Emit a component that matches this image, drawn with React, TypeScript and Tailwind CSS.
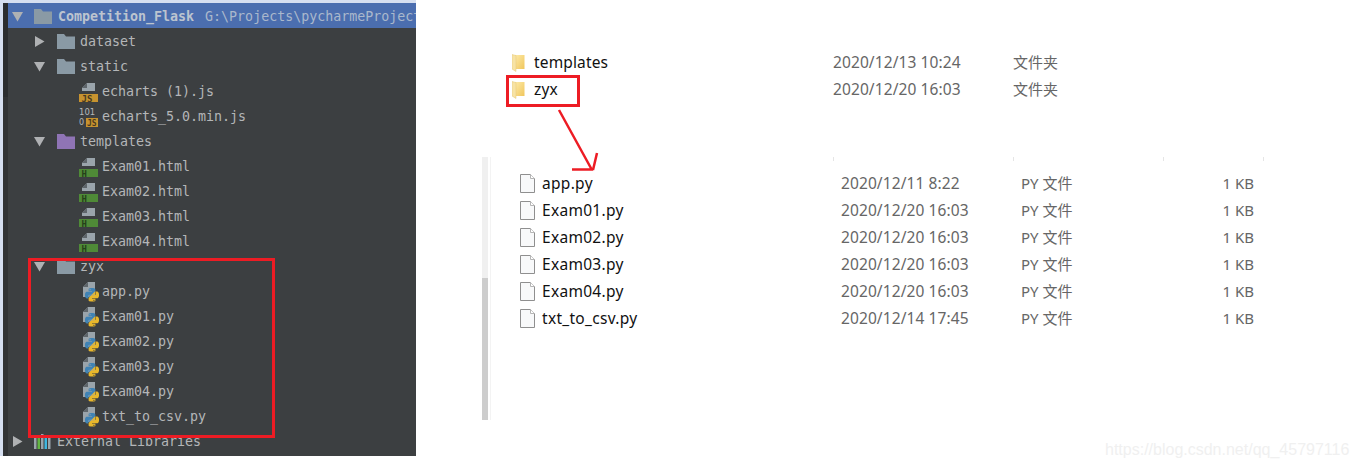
import { SiPython } from "react-icons/si"

const winFont = { fontFamily: '"Noto Sans", "Noto Sans CJK SC", sans-serif' }

function Arrow({ open, className = "" }: { open: boolean; className?: string }) {
  return (
    <svg width="11" height="11" viewBox="0 0 11 11" className={`shrink-0 ${className}`}>
      {open ? <path d="M0 1h11L5.500 10.500z" fill="#afb1b3" /> : <path d="M1 0v11L10.500 5.500z" fill="#afb1b3" />}
    </svg>
  )
}

function Folder({ color = "#8a9aa5" }: { color?: string }) {
  return (
    <svg width="18" height="15" viewBox="0 0 18 15" className="shrink-0">
      <path d="M0 0h7l2 2.500h9V15H0z" fill={color} />
    </svg>
  )
}

function Badge({ color, label, dark }: { color: string; label: string; dark: string }) {
  return (
    <svg width="20" height="20" viewBox="0 0 20 20" className="shrink-0">
      <path d="M8 1h8v8H3V6z" fill="#9aa4ab" />
      <path d="M8 1v5H3z" fill="#5f666b" />
      <rect x="0" y="12" width="19" height="8" fill={color} />
      <text x="2.500" y="19.500" fontSize="9" fontWeight="bold" fill={dark} fontFamily="DejaVu Sans Mono">{label}</text>
    </svg>
  )
}

function MinJs() {
  return (
    <svg width="20" height="20" viewBox="0 0 20 20" className="shrink-0">
      <text x="0" y="8" fontSize="8.500" fill="#b4b8ba" fontFamily="DejaVu Sans" letterSpacing="0">101</text>
      <text x="0" y="18" fontSize="8" fill="#b4b8ba" fontFamily="DejaVu Sans">0</text>
      <rect x="7" y="11" width="12" height="9" fill="#c7932f" />
      <text x="8" y="18.500" fontSize="8" fontWeight="bold" fill="#4a3b20" fontFamily="DejaVu Sans Mono">JS</text>
    </svg>
  )
}

function PyIcon() {
  return (
    <div className="relative h-[22px] w-[20px] shrink-0">
      <svg width="20" height="22" viewBox="0 0 20 22">
        <path d="M9 1h7v15H4V6z" fill="#9aa4ab" />
        <path d="M9 1v5H4z" fill="#5f666b" />
      </svg>
      <SiPython size={14} color="#3f83b5" className="absolute left-[6px] top-[7px] [clip-path:polygon(0_0,100%_0,0_100%)]" />
      <SiPython size={14} color="#e8b72b" className="absolute left-[6px] top-[7px] [clip-path:polygon(100%_0,100%_100%,0_100%)]" />
    </div>
  )
}

function TreeRow({ icon, children, pl, arrow }: { icon: React.ReactNode; children: React.ReactNode; pl: string; arrow?: boolean }) {
  return (
    <div className={`flex h-[25px] items-center ${pl}`}>
      {arrow !== undefined && <Arrow open={arrow} className="mr-[12px]" />}
      {icon}
      <span className={`${arrow !== undefined ? "ml-[5px]" : "ml-[3px]"} whitespace-pre`}>{children}</span>
    </div>
  )
}

function WinFolder() {
  return (
    <svg width="13" height="18" viewBox="0 0 13 18" className="shrink-0">
      <defs>
        <linearGradient id="fold" x1="0" y1="0" x2="1" y2="1">
          <stop offset="0" stopColor="#fdeaa8" />
          <stop offset="1" stopColor="#f0c65c" />
        </linearGradient>
      </defs>
      <path d="M3 1h9.500v14H3z" fill="url(#fold)" />
      <path d="M0 0.500l4 1v16l-4-2.500z" fill="#f7e3a4" stroke="#e5c678" strokeWidth="0.500" />
    </svg>
  )
}

function WinFile() {
  return (
    <svg width="15" height="19" viewBox="0 0 15 19" className="shrink-0">
      <path d="M0.500 0.500h10l4 4v14h-14z" fill="#f8f9fa" stroke="#8f8f8f" />
      <path d="M10.500 0.500v4h4" fill="#ffffff" stroke="#b5b5b5" />
    </svg>
  )
}

const topRows = [
  ["templates", "2020/12/13 10:24"],
  ["zyx", "2020/12/20 16:03"],
]

const pyFiles = [
  ["app.py", "2020/12/11 8:22"],
  ["Exam01.py", "2020/12/20 16:03"],
  ["Exam02.py", "2020/12/20 16:03"],
  ["Exam03.py", "2020/12/20 16:03"],
  ["Exam04.py", "2020/12/20 16:03"],
  ["txt_to_csv.py", "2020/12/14 17:45"],
]

export default function App() {
  return (
    <div className="relative flex h-[466px] w-[1357px] overflow-hidden bg-white">
      {/* left: pycharm project tree */}
      <div className="flex h-full w-[416px] shrink-0 flex-col">
        <div className="h-[3px] bg-[#d6dff0]" />
        <div className="flex h-[453px]">
          <div className="w-[3px] shrink-0 bg-[#d6dff0]" />
          <div className="flex w-[5px] shrink-0 flex-col">
            <div className="h-[94px] bg-[#2b2d2f]" />
            <div className="flex-1 bg-[#313335]" />
          </div>
          <div
            className="min-w-0 flex-1 overflow-hidden bg-[#3c3f41] text-[13.3px] text-[#b4b6b8]"
            style={{ fontFamily: '"DejaVu Sans Mono", monospace' }}
          >
            <div className="flex h-[25px] items-center whitespace-pre bg-[#4b6eaf] pl-[4px] pt-[2px]">
              <Arrow open={true} className="mr-[11px]" />
              <Folder />
              <span className="ml-[6px] shrink-0 font-bold text-[#bcc4cf]">Competition_Flask</span>
              <span className="ml-[11px] shrink-0 text-[#aab8cc]">G:\Projects\pycharmeProjects</span>
            </div>
            <div className="pt-[1px]">
              <TreeRow pl="pl-[26px]" arrow={false} icon={<Folder />}>dataset</TreeRow>
              <TreeRow pl="pl-[26px]" arrow={true} icon={<Folder />}>static</TreeRow>
              <TreeRow pl="pl-[71px]" icon={<Badge color="#c7932f" label="JS" dark="#4a3b20" />}>echarts (1).js</TreeRow>
              <TreeRow pl="pl-[71px]" icon={<MinJs />}>echarts_5.0.min.js</TreeRow>
              <TreeRow pl="pl-[26px]" arrow={true} icon={<Folder color="#8f74b5" />}>templates</TreeRow>
              {["Exam01.html", "Exam02.html", "Exam03.html", "Exam04.html"].map((f) => (
                <TreeRow key={f} pl="pl-[71px]" icon={<Badge color="#4f8a37" label="H" dark="#25401a" />}>{f}</TreeRow>
              ))}
              <TreeRow pl="pl-[26px]" arrow={true} icon={<Folder />}>zyx</TreeRow>
              {pyFiles.map(([f]) => (
                <TreeRow key={f} pl="pl-[71px]" icon={<PyIcon />}>{f}</TreeRow>
              ))}
              <div className="flex h-[25px] items-center pl-[4px]">
                <Arrow open={false} className="mr-[11px]" />
                <svg width="18" height="15" viewBox="0 0 18 15" className="shrink-0">
                  <rect x="0" y="2" width="2.500" height="13" fill="#9aa4ab" />
                  <rect x="3.500" y="2" width="2.500" height="13" fill="#62b543" />
                  <rect x="7" y="0" width="2.500" height="15" fill="#9aa4ab" />
                  <rect x="10.500" y="2" width="2.500" height="13" fill="#40b6e0" />
                  <rect x="14" y="2" width="2.500" height="13" fill="#9aa4ab" />
                </svg>
                <span className="ml-[5px]">External Libraries</span>
              </div>
            </div>
          </div>
        </div>
      </div>

      {/* right: explorer windows */}
      <div className="flex-1 pt-[49px] text-[15.500px]" style={winFont}>
        <div className="pl-[96px]">
          {topRows.map(([name, date]) => (
            <div key={name} className="flex h-[27px] items-center">
              <div className="flex w-[321px] items-center gap-[9px] tracking-[0.15px] text-[#111]">
                <WinFolder />
                {name}
              </div>
              <div className="w-[180px] tracking-[0.1px] text-[#666]">{date}</div>
              <div className="text-[15px] text-[#666]">文件夹</div>
            </div>
          ))}
        </div>
        <div className="ml-[66px] mt-[54px] flex h-[263px]">
          <div className="flex w-[6px] flex-col">
            <div className="h-[121px] bg-[#f0f0f0]" />
            <div className="flex-1 bg-[#cdcdcd]" />
          </div>
          <div className="ml-[2px] flex-1 border-l border-[#f3f3f3]">
            <div className="flex h-[13px] items-start pl-[342px]">
              <div className="h-[4px] w-[180px] border-l border-[#e5e5e5]" />
              <div className="h-[4px] w-[150px] border-l border-[#e5e5e5]" />
              <div className="h-[4px] w-[100px] border-l border-[#e5e5e5]" />
              <div className="h-[4px] w-[1px] bg-[#e5e5e5]" />
            </div>
            {pyFiles.map(([name, date]) => (
              <div key={name} className="flex h-[27px] items-center pl-[29px]">
                <div className="flex w-[321px] items-center gap-[7px] tracking-[0.3px] text-[#111]">
                  <WinFile />
                  {name}
                </div>
                <div className="w-[180px] tracking-[0.1px] text-[#666]">{date}</div>
                <div className="w-[150px] text-[15px] text-[#666]">PY 文件</div>
                <div className="w-[83px] text-right text-[15px] text-[#666]">1 KB</div>
              </div>
            ))}
          </div>
        </div>
      </div>

      {/* red annotations drawn over the shot */}
      <div className="pointer-events-none absolute left-[28px] top-[258px] h-[180px] w-[247px] border-[3px] border-[#ed1c24]" />
      <div className="pointer-events-none absolute left-[506px] top-[75px] h-[32px] w-[74px] border-[3px] border-[#ed1c24]" />
      <svg className="pointer-events-none absolute left-[550px] top-[105px]" width="55" height="75" viewBox="0 0 55 75">
        <path d="M9 5L42 65M22 64.500h21M47 48l-4 17" fill="none" stroke="#ed1c24" strokeWidth="2.500" />
      </svg>

      <div
        className="pointer-events-none absolute left-[1105px] top-[438px] whitespace-nowrap text-[16px] text-[#f0f0f0]"
        style={{ fontFamily: '"Liberation Sans", sans-serif' }}
      >
        https://blog.csdn.net/qq_45797116
      </div>
    </div>
  )
}
